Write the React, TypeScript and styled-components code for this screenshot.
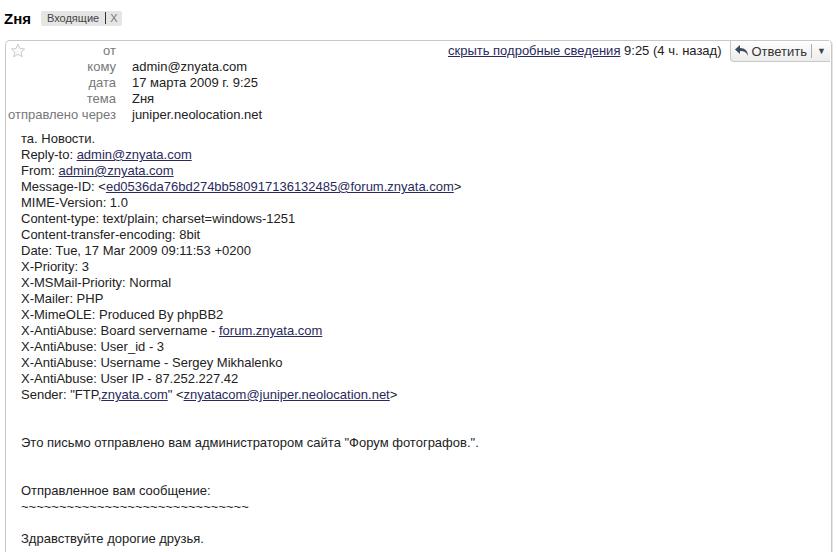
import React from "react";
import styled, { createGlobalStyle } from "styled-components";

const Global = createGlobalStyle`
  html, body { margin: 0; padding: 0; background: #fff; }
  body { font-family: "Liberation Sans", Arial, sans-serif; font-size: 13px; color: #222; }
`;

const Page = styled.div`
  width: 837px;
  height: 552px;
  overflow: hidden;
`;

const TitleBar = styled.div`
  display: flex;
  align-items: center;
  height: 40px;
  padding: 0 0 4px 4px;
  box-sizing: border-box;
`;

const Subject = styled.h1`
  margin: 0;
  font-size: 15px;
  font-weight: bold;
  color: #000;
  font-family: "Liberation Sans", Arial, sans-serif;
`;

const Tag = styled.span`
  margin-left: 10px;
  display: inline-flex;
  align-items: center;
  height: 15px;
  padding: 0 5px 0 6px;
  background: #e5e5e5;
  border-radius: 2px;
  font-size: 11px;
  color: #444;
`;

const TagSep = styled.span`
  width: 1px;
  height: 12px;
  background: #333;
  margin: 0 4px 0 6px;
`;

const TagClose = styled.span`
  color: #777;
`;

const Card = styled.div`
  margin-left: 5px;
  width: 827px;
  box-sizing: border-box;
  border: 1px solid #c8c8c8;
  border-bottom: none;
  border-radius: 5px 5px 0 0;
  box-shadow: 1px 0 0 #e6e6e6;
  min-height: 520px;
`;

const Header = styled.div`
  display: flex;
  align-items: flex-start;
`;

const Details = styled.div`
  flex: 1;
  display: grid;
  grid-template-columns: 110px 1fr;
  column-gap: 16px;
  padding-top: 2px;
  line-height: 16px;
`;

const Label = styled.div`
  color: #777;
  text-align: right;
  white-space: nowrap;
  display: flex;
  justify-content: flex-end;
  align-items: flex-start;
`;

const StarLabel = styled(Label)`
  justify-content: space-between;
`;

const Value = styled.div`
  color: #222;
  white-space: nowrap;
`;

const Actions = styled.div`
  display: flex;
  align-items: flex-start;
`;

const When = styled.div`
  padding-top: 2px;
  line-height: 16px;
  white-space: nowrap;
  color: #222;
  margin-right: 8px;
`;

const Link = styled.a`
  color: #2a2a5c;
  text-decoration: underline;
  cursor: pointer;
`;

const ReplyButton = styled.div`
  display: flex;
  align-items: center;
  height: 21px;
  box-sizing: border-box;
  padding: 0 4px 0 3px;
  margin-right: 1px;
  border-left: 1px solid #c8c8c8;
  border-bottom: 1px solid #c8c8c8;
  border-radius: 0 0 0 4px;
  background: linear-gradient(#fff, #ececec);
  color: #333;
  font-size: 13px;
  white-space: nowrap;
`;

const BtnSep = styled.span`
  width: 1px;
  height: 14px;
  background: #aaa;
  margin: 0 5px 0 4px;
`;

const Caret = styled.span`
  font-size: 9px;
  color: #444;
`;

const Body = styled.div`
  padding: 8px 0 0 15px;
  line-height: 16px;
  color: #222;
  white-space: pre;
`;

const Line = styled.div`
  min-height: 16px;
`;

const Star = () => (
  <svg width="16" height="16" viewBox="0 0 16 16" style={{ marginLeft: 4 }}>
    <path
      d="M8 1.2l2 4.3 4.6.5-3.4 3.1 1 4.6L8 11.4l-4.2 2.3 1-4.6L1.4 6l4.6-.5z"
      fill="#fafafa"
      stroke="#c9c9c9"
      strokeWidth="1"
      strokeLinejoin="round"
    />
  </svg>
);

const ReplyIcon = () => (
  <svg width="16" height="14" viewBox="0 0 16 14" style={{ marginRight: 2 }}>
    <path d="M6 1L1 5.5 6 10V7c4 0 6.5 1 8 5 0-5-3-8-8-8z" fill="#3b4a5e" />
  </svg>
);

const headerRows: [string, string][] = [
  ["кому", "admin@znyata.com"],
  ["дата", "17 марта 2009 г. 9:25"],
  ["тема", "Zня"],
  ["отправлено через", "juniper.neolocation.net"],
];

export default function App() {
  return (
    <Page>
      <Global />
      <TitleBar>
        <Subject>Zня</Subject>
        <Tag>
          Входящие
          <TagSep />
          <TagClose>X</TagClose>
        </Tag>
      </TitleBar>
      <Card>
        <Header>
          <Details>
            <StarLabel>
              <Star />
              <span>от</span>
            </StarLabel>
            <Value />
            {headerRows.map(([l, v]) => (
              <React.Fragment key={l}>
                <Label>{l}</Label>
                <Value>{v}</Value>
              </React.Fragment>
            ))}
          </Details>
          <Actions>
            <When>
              <Link>скрыть подробные сведения</Link> 9:25 (4 ч. назад)
            </When>
            <ReplyButton>
              <ReplyIcon />
              Ответить
              <BtnSep />
              <Caret>▼</Caret>
            </ReplyButton>
          </Actions>
        </Header>
        <Body>
          <Line>та. Новости.</Line>
          <Line>Reply-to: <Link>admin@znyata.com</Link></Line>
          <Line>From: <Link>admin@znyata.com</Link></Line>
          <Line>Message-ID: &lt;<Link>ed0536da76bd274bb580917136132485@forum.znyata.com</Link>&gt;</Line>
          <Line>MIME-Version: 1.0</Line>
          <Line>Content-type: text/plain; charset=windows-1251</Line>
          <Line>Content-transfer-encoding: 8bit</Line>
          <Line>Date: Tue, 17 Mar 2009 09:11:53 +0200</Line>
          <Line>X-Priority: 3</Line>
          <Line>X-MSMail-Priority: Normal</Line>
          <Line>X-Mailer: PHP</Line>
          <Line>X-MimeOLE: Produced By phpBB2</Line>
          <Line>X-AntiAbuse: Board servername - <Link>forum.znyata.com</Link></Line>
          <Line>X-AntiAbuse: User_id - 3</Line>
          <Line>X-AntiAbuse: Username - Sergey Mikhalenko</Line>
          <Line>X-AntiAbuse: User IP - 87.252.227.42</Line>
          <Line>Sender: "FTP,<Link>znyata.com</Link>" &lt;<Link>znyatacom@juniper.neolocation.net</Link>&gt;</Line>
          <Line />
          <Line />
          <Line>Это письмо отправлено вам администратором сайта "Форум фотографов.".</Line>
          <Line />
          <Line />
          <Line>Отправленное вам сообщение:</Line>
          <Line>~~~~~~~~~~~~~~~~~~~~~~~~~~~~~~</Line>
          <Line />
          <Line>Здравствуйте дорогие друзья.</Line>
        </Body>
      </Card>
    </Page>
  );
}
